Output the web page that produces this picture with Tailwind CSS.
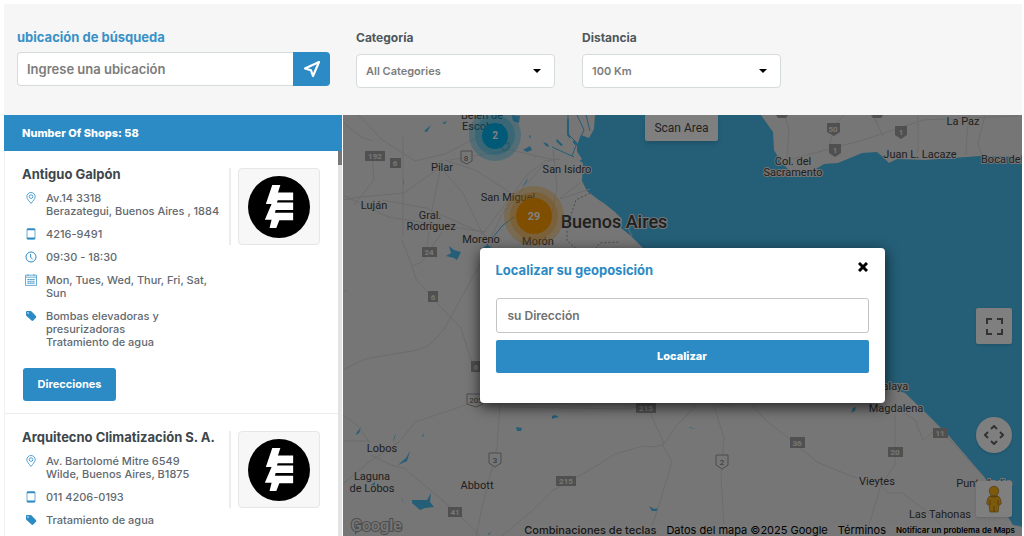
<!DOCTYPE html>
<html lang="es">
<head>
    <meta charset="utf-8">
    <meta name="viewport" content="width=device-width, initial-scale=1.0">
    <title>Localizador de tiendas</title>
    <script src="https://cdn.jsdelivr.net/npm/@tailwindcss/browser@4"></script>
</head>
<body class="flex flex-col h-screen overflow-hidden bg-white pt-1 pl-1 pr-[2px] font-['Inter','Liberation_Sans',sans-serif] text-[#626970]">

    <!-- shared icons -->
    <svg class="hidden">
        <symbol id="pin" viewBox="0 0 12 12"><g fill="none" stroke="#2c8ac4" stroke-width=".8"><path d="M6 11.4C4 8.8 1.8 6.800 1.800 4.700a4.200 4.200 0 0 1 8.400 0C10.200 6.800 8 8.800 6 11.400z"/><circle cx="6" cy="4.600" r="1.800"/></g></symbol>
        <symbol id="phone" viewBox="0 0 12 12"><rect x="2" y=".6" width="8" height="10.800" rx="1" fill="none" stroke="#2c8ac4" stroke-width=".7"/><path d="M2 1.500h8M2 10.300h8" stroke="#2c8ac4" stroke-width="1.400"/></symbol>
        <symbol id="clock" viewBox="0 0 12 12"><g fill="none" stroke="#2c8ac4"><circle cx="6" cy="6" r="5"/><path d="M5.600 3v3.300l2 1.700"/></g></symbol>
        <symbol id="calendar" viewBox="0 0 12 12"><g fill="none" stroke="#2c8ac4" stroke-width=".7"><path d="M.5 1.200h11v10.200H.5zM.5 3.200h11M3 .2v1.600M9 .2v1.600"/><path d="M2.500 5.500h7M2.500 7.300h7M2.500 9.100h7" stroke-dasharray="1.400 .5" stroke-width="1.100"/></g></symbol>
        <symbol id="tag" viewBox="0 0 12 12"><path fill="#2c8ac4" fill-rule="evenodd" d="M1 2.200C1 1.500 1.500 1 2.200 1h3.300c.4 0 .8.200 1.100.5l4.300 4.600c.5.500.5 1.200 0 1.700L8.200 10.500c-.5.500-1.200.5-1.700 0L1.500 6c-.3-.3-.5-.7-.5-1.100zM3 2.200a.8.8 0 1 0 0 1.600.8.8 0 0 0 0-1.600z"/></symbol>
        <symbol id="logo" viewBox="38 34 184 184">
            <circle cx="130" cy="126" r="92"/>
            <path fill="#fff" d="M110 61h24l-7 22h45v23h-46l-2 7h48v22h-52l-2 8h54v22h-41l-9 23h-20l6-24H88l20-47H91z"/>
        </symbol>
    </svg>

    <header class="flex items-start shrink-0 bg-[#f6f6f6] h-[111px] pl-[13px] pt-6">
        <form class="w-[313px]">
            <label for="place" class="block text-[13px] leading-[18px] font-bold text-[#3a91c7]">ubicación de búsqueda</label>
            <div class="flex mt-[6px]">
                <input id="place" type="text" placeholder="Ingrese una ubicación" class="flex-1 min-w-0 h-[34px] px-[9px] bg-white border border-r-0 border-[#d5dadd] rounded-l text-[13px] font-semibold placeholder:text-[#7c7c7c]">
                <button type="button" aria-label="Buscar" class="flex items-center justify-center w-[37px] bg-[#2c8ac4] rounded-r">
                    <svg class="w-[18px] h-[18px]" viewBox="0 0 18 18"><path d="M16 2 2 8.500l6 1.800 2 5.700z" fill="none" stroke="#fff" stroke-width="2.200" stroke-linejoin="round"/></svg>
                </button>
            </div>
        </form>
        <div class="ml-[26px] w-[199px]">
            <label for="category" class="block text-[12px] leading-5 font-bold text-[#4d565b]">Categoría</label>
            <div class="relative mt-[6px]">
                <select id="category" class="appearance-none w-full h-[34px] pl-[9px] bg-white border border-[#d5dadd] rounded text-[11px] font-semibold text-[#7c7c7c]">
                    <option>All Categories</option>
                </select>
                <svg class="absolute right-[14px] top-[15px] w-2 h-1 pointer-events-none" viewBox="0 0 8 4"><path d="M0 0h8L4 4z"/></svg>
            </div>
        </div>
        <div class="ml-[27px] w-[199px]">
            <label for="distance" class="block text-[12px] leading-5 font-bold text-[#4d565b]">Distancia</label>
            <div class="relative mt-[6px]">
                <select id="distance" class="appearance-none w-full h-[34px] pl-[9px] bg-white border border-[#d5dadd] rounded text-[11px] font-semibold text-[#7c7c7c]">
                    <option>100 Km</option>
                </select>
                <svg class="absolute right-[14px] top-[15px] w-2 h-1 pointer-events-none" viewBox="0 0 8 4"><path d="M0 0h8L4 4z"/></svg>
            </div>
        </div>
    </header>

    <main class="flex flex-1 min-h-0">
        <aside class="flex flex-col shrink-0 w-[338px] min-h-0">
            <h2 class="shrink-0 h-[36px] pl-[18px] bg-[#2c8ac4] text-white text-[11px] leading-[36px] font-extrabold">Number Of Shops: 58</h2>
            <div class="flex flex-1 min-h-0">
                <ul class="flex-1 min-w-0 overflow-hidden border-l border-[#f0f0f0]">
                    <li class="flex pl-[17px] pr-[18px] pt-[14px] pb-[12px] border-b border-[#ececec]">
                        <div class="flex-1 min-w-0">
                            <h3 class="whitespace-nowrap text-[13px] leading-[18px] font-bold text-[#3d464b]">Antiguo Galpón</h3>
                            <ul class="flex flex-col gap-[10px] mt-[9px] text-[11px] leading-[13px] font-medium">
                                <li class="flex gap-[9px]"><svg class="w-3 h-3 shrink-0 ml-[3px]"><use href="#pin"/></svg><p class="whitespace-nowrap">Av.14 3318<br>Berazategui, Buenos Aires , 1884</p></li>
                                <li class="flex gap-[9px]"><svg class="w-3 h-3 shrink-0 ml-[3px]"><use href="#phone"/></svg><p>4216-9491</p></li>
                                <li class="flex gap-[9px]"><svg class="w-3 h-3 shrink-0 ml-[3px]"><use href="#clock"/></svg><p>09:30 - 18:30</p></li>
                                <li class="flex gap-[9px]"><svg class="w-3 h-3 shrink-0 ml-[3px]"><use href="#calendar"/></svg><p>Mon, Tues, Wed, Thur, Fri, Sat,<br>Sun</p></li>
                                <li class="flex gap-[9px]"><svg class="w-3 h-3 shrink-0 ml-[3px]"><use href="#tag"/></svg><p>Bombas elevadoras y<br>presurizadoras<br>Tratamiento de agua</p></li>
                            </ul>
                            <button type="button" class="mt-[19px] ml-px w-[93px] h-[33px] rounded-[3px] bg-[#2c8ac4] text-white text-[11px] font-bold">Direcciones</button>
                        </div>
                        <div class="shrink-0 h-[77px] mt-[3px] pl-[7px] border-l-2 border-[#ececec]">
                            <div class="flex items-center justify-center w-[82px] h-full bg-[#f7f7f7] border border-[#e6e6e6] rounded"><svg class="w-[62px] h-[62px]"><use href="#logo"/></svg></div>
                        </div>
                    </li>
                    <li class="flex pl-[17px] pr-[18px] pt-[14px] pb-[12px] border-b border-[#ececec]">
                        <div class="flex-1 min-w-0">
                            <h3 class="whitespace-nowrap text-[13px] leading-[18px] font-bold text-[#3d464b]">Arquitecno Climatización S. A.</h3>
                            <ul class="flex flex-col gap-[10px] mt-[9px] text-[11px] leading-[13px] font-medium">
                                <li class="flex gap-[9px]"><svg class="w-3 h-3 shrink-0 ml-[3px]"><use href="#pin"/></svg><p>Av. Bartolomé Mitre 6549<br>Wilde, Buenos Aires, B1875</p></li>
                                <li class="flex gap-[9px]"><svg class="w-3 h-3 shrink-0 ml-[3px]"><use href="#phone"/></svg><p>011 4206-0193</p></li>
                                <li class="flex gap-[9px]"><svg class="w-3 h-3 shrink-0 ml-[3px]"><use href="#tag"/></svg><p>Tratamiento de agua</p></li>
                            </ul>
                        </div>
                        <div class="shrink-0 h-[77px] mt-[3px] pl-[7px] border-l-2 border-[#ececec]">
                            <div class="flex items-center justify-center w-[82px] h-full bg-[#f7f7f7] border border-[#e6e6e6] rounded"><svg class="w-[62px] h-[62px]"><use href="#logo"/></svg></div>
                        </div>
                    </li>
                </ul>
                <!-- scrollbar -->
                <div class="w-1 bg-[#e3e3e3]"><div class="h-[14px] bg-[#777]"></div></div>
            </div>
        </aside>

        <section class="relative flex-1 min-w-0 ml-px overflow-hidden">
            <svg class="absolute inset-0 w-full h-full font-['Roboto','Liberation_Sans',sans-serif]" viewBox="343 115 679 421" preserveAspectRatio="xMidYMid slice">
                <path fill="#ececec" d="M343 115h679v421H343z"/>
                <!-- water -->
                <g fill="#48bcee">
                    <path d="M595 115l-1 14-5 9-8-3-4 10 0 14 6 4-1 18 5 10 12 9 6 4 10 8 7 7-1 9 10 8 14 14L760 350l145 43 23 22 22 22 35 41 28 47 9 2V157l-42-1-27 2-28 2-28-1-8 4-6-6-6-5-15 1-24 10-14 1-10 6-20 5-13-13-7-12-1-18-12-17z"/>
                    <path d="M424 131l7-6-4 7zM442 123l5-2-2 3zM523 150l7-4 2 4-5 2zM529 135l2 1-1 3zM535 157l1-1-1 2zM404 179v7l-1-4zM524 184l4-6-1 3-5 7zM449 246l5 4 7 2-4 8-3-2-8-2 5-3zM412 500l15 0 4-7-1 9 4 5-9 1-5 2-8-7zM401 497l3 6-2-3zM357 432l4-5-2 6-3 2zM393 443l3-10-2 4zM398 465l8-7 4-7-3 10zM422 436l2-3-1 4zM516 427l6 1-1 3h-4zM552 416l3-1 4 2-4 1-3 1zM649 506l5 3 4-1-1 3h-5zM853 408l3-1-1 4-4 2zM355 528l4-4-2 8-2 3zM371 485l4-3 0 5zM488 534l3-2-2 3zM689 427l7 2-6-1zM714 495l1 4zM480 249l8-4 4 3z"/>
                    <path d="M512 115l8 1-1 7-6-2z"/>
                    <path d="M543 142l5 2 1 3-3-1zM557 139l6 6-2 1-5-5zM567 119h2v15l8 10-2 1-8-10z"/>
                </g>
                <path fill="#ececec" d="M580 115l4 12-5 8-2-9zM587 115l5 8-2 6zM569 130l5 10-3 4zM566 149l8-2 8 12-4 3z"/>
                <path fill="none" stroke="#48bcee" d="M568 115v19l9 9-5 13M577 115l7 15-4 9M586 115l4 16M552 147l22 10M480 254l22-28 12-9"/>
                <!-- roads -->
                <g fill="none" stroke="#d8d8d8">
                    <path d="M359 115l22 24 34 22 30-7 43-22M343 122l18 15 12 4M344 200l16-3 44-4 38-27M372 155l2 25-20 25M403 136v100M442 160l-10 50-5 36M381 200l45 8 56 25 14 10M343 195l45 22 52 8 45 7M441 168l22 25 20 42M445 160l30 10 30 19 25 18M482 235l45-60 18-14 15-2M450 160l60-10 45 10M488 243l15-30 40-48M553 150l4 37-6 32M560 198l20-15M402 240l10 26 10-4 20-30M412 266l4 13 22 25 23 24 14 45M343 370l22-11 28-5 20-3 15-5 15-15 36-65 15-25M475 402l-60 20-16 20-30 20-26 22M343 415l14 10 13 18M371 455l20 10 13 3 45 38 26 24 5 8M343 441h27M500 404l-3 44-15 60-6 28M502 536l30-25 20-20 36-20 27-17 28-8 13 1 8-3-14-32M662 444l10 18-12 40-8 24M664 444l12-18 20-20M714 406l10 32-3 40 3 46M752 406l15 15 20 16 30 25 34 14 6 2M895 415v50l-14 20-12 40M880 485l8 8h14l30 22 14 15M900 410l15 10 8 20 15-12 12 12 35 38M560 199l30-10M785 115l4 15-2 28M788 160l75-20 60-20 95-4M829 146l7-22 8-9M878 124l-5-8 10 20M918 115v38M969 115l-2 20-1 20M985 115l-7 28 4 13"/>
                    <path d="M632 236l-5-10M343 290l5 2M730 406l-10-2M645 406l-20 3-120-2"/>
                </g>
                <path fill="none" stroke="#999" stroke-dasharray="2 2" d="M590 193l-14 7-4 12-5 14v15l12 10M590 255l10-12 20-1"/>
                <!-- road shields -->
                <g fill="#a0a0a0">
                    <path d="M365 151h20v10h-20zM390 158h11v10h-11zM422 247h15v10h-15zM428 291h10v11h-10zM471 361h10v11h-10zM636 403h20v10h-20zM556 476h20v10h-20zM448 507h14v10h-14zM790 437h15v11h-15zM888 447h15v10h-15zM933 428h15v10h-15z"/>
                    <path d="M827 123h13v9l-6 4-7-4zM829 144h12v9l-6 4-6-4zM895 126h12v9l-6 4-6-4zM776 115h12l-2 3h-8zM871 115h12l-2 3h-8z"/>
                </g>
                <g fill="#ececec" stroke="#999">
                    <path d="M461 151h11v10l-5 3-6-3zM489 453h12v10l-6 4-6-4zM716 455h12v10l-6 4-6-4zM467 394h16v10l-7 3-9-3zM498 143h11v5l-5 3z"/>
                </g>
                <g text-anchor="middle" font-size="8" font-weight="700" fill="#eee">
                    <text x="375" y="159">192</text><text x="395" y="166">6</text><text x="429" y="255">24</text><text x="433" y="300">6</text><text x="476" y="370">6</text><text x="646" y="411">215</text><text x="566" y="484">215</text><text x="455" y="515">41</text><text x="797" y="446">36</text><text x="895" y="455">20</text><text x="940" y="436">11</text><text x="833" y="132">50</text><text x="835" y="153">1</text><text x="901" y="135">1</text>
                </g>
                <g text-anchor="middle" font-size="8" fill="#666">
                    <text x="466" y="161">8</text><text x="495" y="463">3</text><text x="722" y="465">2</text><text x="476" y="403">205</text>
                </g>
                <!-- place names -->
                <g text-anchor="middle" font-size="11" fill="#404040" stroke="#ececec" stroke-width="2" paint-order="stroke">
                    <text x="482" y="119">Belén de</text><text x="482" y="130">Escobar</text><text x="442" y="171">Pilar</text><text x="567" y="173">San Isidro</text><text x="508" y="201">San Miguel</text><text x="374" y="209">Luján</text><text x="430" y="219">Gral.</text><text x="431" y="230">Rodríguez</text><text x="481" y="243">Moreno</text><text x="538" y="245">Morón</text><text x="793" y="165">Col. del</text><text x="793" y="176">Sacramento</text><text x="920" y="158">Juan L. Lacaze</text><text x="963" y="125">La Paz</text><text x="981" y="163" text-anchor="start">Boca del</text><text x="890" y="390">Atalaya</text><text x="896" y="412">Magdalena</text><text x="877" y="485">Vieytes</text><text x="984" y="487">Punta Indio</text><text x="940" y="518">Las Tahonas</text><text x="382" y="452">Lobos</text><text x="372" y="480">Laguna</text><text x="372" y="492">de Lobos</text><text x="477" y="489">Abbott</text>
                    <text x="614" y="228" font-size="18" font-weight="500">Buenos Aires</text>
                </g>
                <!-- shop clusters -->
                <g text-anchor="middle" font-weight="700" fill="#fff">
                    <circle cx="495" cy="135" r="26" fill="#00b4ee" opacity=".3"/><circle cx="495" cy="135" r="20" fill="#00b4ee" opacity=".3"/><circle cx="495" cy="136" r="13" fill="#00b4ee"/><text x="495" y="139" font-size="10">2</text>
                    <circle cx="534" cy="216" r="30" fill="#ff9c00" opacity=".3"/><circle cx="534" cy="216" r="24" fill="#ff9c00" opacity=".3"/><circle cx="534" cy="216" r="18" fill="#ff9c00"/><text x="534" y="220" font-size="11">29</text>
                </g>
                <text x="351" y="531" font-size="16" font-weight="500" fill="#ececec" stroke="#999" stroke-width="2" paint-order="stroke">Google</text>
            </svg>

            <!-- map controls -->
            <button type="button" class="absolute top-0 left-[302px] w-[73px] h-[26px] bg-white rounded-b-[2px] shadow-md font-['Roboto',sans-serif] text-[12px] text-[#444]">Scan Area</button>
            <button type="button" aria-label="Pantalla completa" class="absolute right-[10px] top-[193px] flex items-center justify-center w-9 h-9 bg-white rounded-[2px] shadow">
                <svg class="w-[17px] h-[17px]" viewBox="0 0 17 17"><path d="M1 6V1h5M11 1h5v5M16 11v5h-5M6 16H1v-5" fill="none" stroke="#666" stroke-width="2"/></svg>
            </button>
            <button type="button" aria-label="Controles de cámara" class="absolute right-[10px] bottom-[83px] flex items-center justify-center w-9 h-9 bg-white rounded-full shadow">
                <svg class="w-5 h-5" viewBox="0 0 20 20"><path d="M7 4l3-3 3 3M7 16l3 3 3-3M4 7l-3 3 3 3M16 7l3 3-3 3" fill="none" stroke="#666" stroke-width="2"/></svg>
            </button>
            <button type="button" aria-label="Street View" class="absolute right-[10px] bottom-[19px] flex items-center justify-center w-9 h-9 bg-white rounded-[2px] shadow">
                <svg class="w-4 h-7" viewBox="0 0 16 28"><path d="M4 11c-2 1-3 4-3.200 8L3 20l1 7h8l1-7 2.200-1c-.2-4-1.200-7-3.200-8z" fill="#fbb31c" stroke="#a97815" stroke-width=".7"/><circle cx="8" cy="6" r="4.800" fill="#fbb31c" stroke="#a97815" stroke-width=".7"/><path d="M4 11q4 2 8 0M8 21v6M4 15v5M12 15v5" fill="none" stroke="#a97815"/></svg>
            </button>
            <div class="absolute right-0 bottom-0 flex items-center gap-[10px] h-[11px] pr-[7px] bg-white/20 whitespace-nowrap text-[11px] leading-[11px] text-black">
                <button type="button" class="font-medium text-[#333]">Combinaciones de teclas</button>
                <span>Datos del mapa ©2025 Google</span>
                <a href="#">Términos</a>
                <a href="#" class="text-[8px] font-semibold">Notificar un problema de Maps</a>
            </div>

            <!-- geolocation dialog -->
            <div class="absolute inset-0 flex items-center justify-center pr-px bg-black/50">
                <form class="w-[405px] max-w-full h-[155px] px-4 pt-3 bg-white rounded shadow-[0_4px_14px_rgba(0,0,0,0.7)]">
                    <div class="flex justify-between">
                        <label for="address" class="text-[13px] leading-5 font-bold text-[#2c8ac4]">Localizar su geoposición</label>
                        <button type="button" aria-label="Cerrar" class="h-[14px] mr-px"><svg class="w-[10px] h-[10px]" viewBox="0 0 10 10"><path d="M1 1l8 8M9 1L1 9" stroke="#000" stroke-width="3"/></svg></button>
                    </div>
                    <input id="address" type="text" placeholder="su Dirección" class="block w-full h-[35px] mt-[18px] px-[11px] border border-[#c4c4c4] rounded-[3px] text-[12px] font-semibold placeholder:text-[#707070]">
                    <button type="button" class="block w-full h-[33px] mt-[7px] rounded-[2px] bg-[#2c8ac4] text-white text-[11px] font-extrabold">Localizar</button>
                </form>
            </div>
        </section>
    </main>
</body>
</html>
